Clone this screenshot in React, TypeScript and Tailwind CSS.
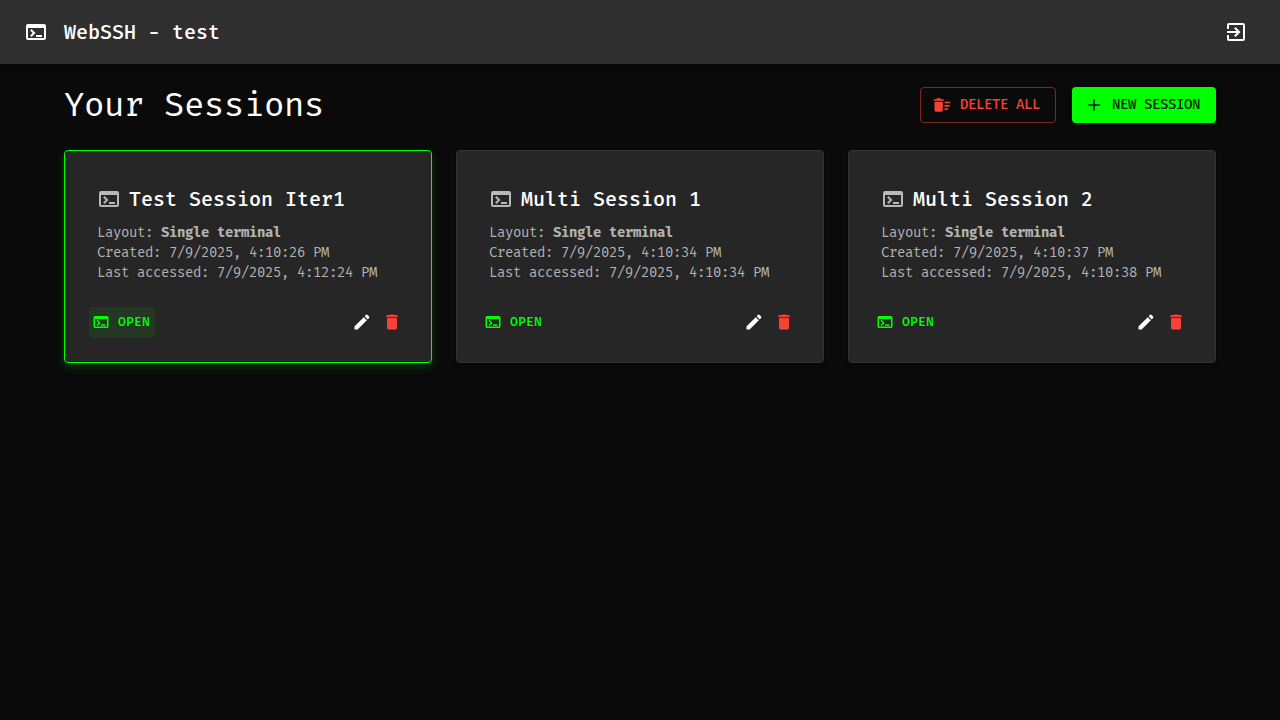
import { MdTerminal, MdExitToApp, MdDeleteSweep, MdAdd, MdEdit, MdDelete } from "react-icons/md";

type Session = { name: string; created: string; accessed: string; active?: boolean };

const sessions: Session[] = [
  { name: "Test Session Iter1", created: "7/9/2025, 4:10:26 PM", accessed: "7/9/2025, 4:12:24 PM", active: true },
  { name: "Multi Session 1", created: "7/9/2025, 4:10:34 PM", accessed: "7/9/2025, 4:10:34 PM" },
  { name: "Multi Session 2", created: "7/9/2025, 4:10:37 PM", accessed: "7/9/2025, 4:10:38 PM" },
];

function SessionCard({ session }: { session: Session }) {
  return (
    <article
      className={
        session.active
          ? "flex h-[213px] flex-col rounded border border-[#00ff00] bg-[#262626] p-6 shadow-[0_4px_8px_rgba(0,255,0,0.2)]"
          : "flex h-[213px] flex-col rounded border border-[#333333] bg-[#262626] p-6 shadow-[0_1px_3px_rgba(0,0,0,0.4)]"
      }
    >
      <div className="px-2 pt-2">
        <div className="flex h-8 items-center gap-2">
          <MdTerminal className="size-6 shrink-0 text-[#b8b8b8]" />
          <h2 className="text-xl leading-8 font-medium whitespace-nowrap">{session.name}</h2>
        </div>
        <div className="mt-2 text-sm leading-5 tracking-[-0.4px] whitespace-nowrap text-[#b3b3b3]">
          <p>Layout: <strong className="font-bold">Single terminal</strong></p>
          <p>Created: {session.created}</p>
          <p>Last accessed: {session.accessed}</p>
        </div>
      </div>
      <div className="mt-auto flex h-[31px] items-start justify-between">
        <button
          className={
            session.active
              ? "flex h-[31px] w-[66px] items-start gap-2 rounded bg-[#00ff00]/8 pt-1.5 pl-[3px] text-[#00ff00]"
              : "flex h-[31px] w-[66px] items-start gap-2 rounded pt-1.5 pl-[3px] text-[#00ff00]"
          }
        >
          <MdTerminal className="size-[18px] shrink-0" />
          <span className="text-[13px] leading-[18px] font-medium tracking-[0.2px]">OPEN</span>
        </button>
        <div className="flex">
          <button className="p-[5px]" aria-label="Edit"><MdEdit className="size-5 text-white" /></button>
          <button className="p-[5px]" aria-label="Delete"><MdDelete className="size-5 text-[#f44336]" /></button>
        </div>
      </div>
    </article>
  );
}

export default function App() {
  return (
    <div className="min-h-screen bg-[#0a0a0a] font-['Fira_Mono','Liberation_Mono',monospace] text-white">
      <header className="relative flex h-16 items-center justify-between bg-[#2f2f2f] pr-8 pl-6 shadow-[0_2px_4px_-1px_rgba(0,0,0,0.2),0_4px_5px_rgba(0,0,0,0.14),0_1px_10px_rgba(0,0,0,0.12)]">
        <div className="flex items-center gap-4">
          <MdTerminal className="size-6" />
          <span className="text-xl leading-8 font-medium">WebSSH - test</span>
        </div>
        <button aria-label="Log out"><MdExitToApp className="size-6" /></button>
      </header>
      <main className="px-16 pt-5">
        <div className="flex h-[42px] items-center justify-between">
          <h1 className="text-[34px] leading-[42px] tracking-[-0.4px]">Your Sessions</h1>
          <div className="flex gap-4">
            <button className="flex h-9 w-[136px] items-center gap-2 rounded border border-[#f44336]/50 pl-[11px] text-[#f44336]">
              <MdDeleteSweep className="size-5 shrink-0" />
              <span className="text-sm font-medium tracking-[-0.4px] whitespace-nowrap">DELETE ALL</span>
            </button>
            <button className="flex h-9 w-36 items-center gap-2 rounded bg-[#00ff00] pl-3 text-black/87 shadow-[0_3px_1px_-2px_rgba(0,0,0,0.2),0_2px_2px_rgba(0,0,0,0.14),0_1px_5px_rgba(0,0,0,0.12)]">
              <MdAdd className="size-5 shrink-0" />
              <span className="text-sm font-medium tracking-[-0.4px] whitespace-nowrap">NEW SESSION</span>
            </button>
          </div>
        </div>
        <section className="mt-6 grid grid-cols-3 gap-6">
          {sessions.map((s) => <SessionCard key={s.name} session={s} />)}
        </section>
      </main>
    </div>
  );
}
